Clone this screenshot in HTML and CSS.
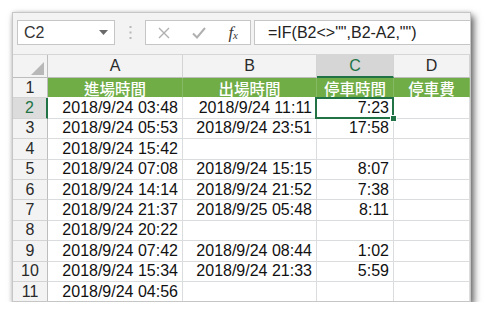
FILE: index.html
```html
<!DOCTYPE html>
<html lang="zh-Hant">
<head>
    <meta charset="UTF-8">
    <title>停車時間</title>
    <link rel="stylesheet" href="styles.css">
</head>
<body>
    <div class="window">
        <div class="toolbar">
            <div class="name-box">
                <span>C2</span>
                <svg class="drop" width="9" height="5" viewBox="0 0 9 5"><path d="M0 0h9L4.5 5z" fill="#6a6a6a"/></svg>
            </div>
            <div class="grip">
                <svg width="3" height="13" viewBox="0 0 3 13"><rect x="0.5" y="0" width="2" height="2" fill="#b8b8b8"/><rect x="0.5" y="5.5" width="2" height="2" fill="#b8b8b8"/><rect x="0.5" y="11" width="2" height="2" fill="#b8b8b8"/></svg>
            </div>
            <div class="fx-box">
                <svg width="12" height="12" viewBox="0 0 12 12"><path d="M1 1l10 10M11 1L1 11" stroke="#b0b0b0" stroke-width="1.4"/></svg>
                <svg width="14" height="12" viewBox="0 0 14 12"><path d="M1 6.5l4 4L13 1" stroke="#b0b0b0" stroke-width="2" fill="none"/></svg>
                <span class="fx">f<sub>x</sub></span>
            </div>
            <div class="formula">=IF(B2&lt;&gt;"",B2-A2,"")</div>
        </div>

        <div class="sheet">
            <div class="corner"></div>
            <div class="col-head">A</div>
            <div class="col-head">B</div>
            <div class="col-head active">C</div>
            <div class="col-head">D</div>

            <div class="row-head">1</div>
            <div class="cell title">進場時間</div>
            <div class="cell title">出場時間</div>
            <div class="cell title">停車時間</div>
            <div class="cell title">停車費</div>

            <div class="row-head active">2</div>
            <div class="cell">2018/9/24 03:48</div>
            <div class="cell">2018/9/24 11:11</div>
            <div class="cell selected">7:23<span class="handle"></span></div>
            <div class="cell"></div>

            <div class="row-head">3</div>
            <div class="cell">2018/9/24 05:53</div>
            <div class="cell">2018/9/24 23:51</div>
            <div class="cell">17:58</div>
            <div class="cell"></div>

            <div class="row-head">4</div>
            <div class="cell">2018/9/24 15:42</div>
            <div class="cell"></div>
            <div class="cell"></div>
            <div class="cell"></div>

            <div class="row-head">5</div>
            <div class="cell">2018/9/24 07:08</div>
            <div class="cell">2018/9/24 15:15</div>
            <div class="cell">8:07</div>
            <div class="cell"></div>

            <div class="row-head">6</div>
            <div class="cell">2018/9/24 14:14</div>
            <div class="cell">2018/9/24 21:52</div>
            <div class="cell">7:38</div>
            <div class="cell"></div>

            <div class="row-head">7</div>
            <div class="cell">2018/9/24 21:37</div>
            <div class="cell">2018/9/25 05:48</div>
            <div class="cell">8:11</div>
            <div class="cell"></div>

            <div class="row-head">8</div>
            <div class="cell">2018/9/24 20:22</div>
            <div class="cell"></div>
            <div class="cell"></div>
            <div class="cell"></div>

            <div class="row-head">9</div>
            <div class="cell">2018/9/24 07:42</div>
            <div class="cell">2018/9/24 08:44</div>
            <div class="cell">1:02</div>
            <div class="cell"></div>

            <div class="row-head">10</div>
            <div class="cell">2018/9/24 15:34</div>
            <div class="cell">2018/9/24 21:33</div>
            <div class="cell">5:59</div>
            <div class="cell"></div>

            <div class="row-head">11</div>
            <div class="cell">2018/9/24 04:56</div>
            <div class="cell"></div>
            <div class="cell"></div>
            <div class="cell"></div>
        </div>
    </div>
</body>
</html>
```

FILE: styles.css
```css
body {
    margin: 0;
    background-color: #FFFFFF;
    font-family: 'Liberation Sans', 'Noto Sans CJK TC', sans-serif;
}
.window {
    width: 459px;
    height: 290px;
    margin: 12px 0 0 12px;
    box-sizing: border-box;
    border: 1px solid #C6C6C6;
    background-color: #F3F3F3;
    box-shadow: 3px 4px 7px rgba(0, 0, 0, 0.6), 0 0 4px rgba(0, 0, 0, 0.12);
    overflow: hidden;
}
.toolbar {
    display: flex;
    align-items: flex-start;
    height: 42px;
    padding: 7px 0 0 4px;
    box-sizing: border-box;
    border-bottom: 1px solid #D6D6D6;
}
.name-box {
    display: flex;
    align-items: center;
    justify-content: space-between;
    width: 98px;
    height: 25px;
    box-sizing: border-box;
    padding: 0 6px 0 6px;
    border: 1px solid #C6C6C6;
    background-color: #FFFFFF;
    font-size: 16px;
    color: #333333;
}
.grip {
    display: flex;
    align-items: center;
    justify-content: center;
    width: 30px;
    height: 25px;
}
.fx-box {
    display: flex;
    align-items: center;
    justify-content: space-between;
    width: 106px;
    height: 25px;
    box-sizing: border-box;
    padding: 0 12px 0 12px;
    border: 1px solid #C6C6C6;
    background-color: #FFFFFF;
}
.fx {
    font-family: 'Liberation Serif', serif;
    font-style: italic;
    font-size: 17px;
    color: #3A3A3A;
}
.fx sub {
    font-size: 11px;
    vertical-align: -1px;
}
.formula {
    flex: 1;
    height: 25px;
    margin-left: 3px;
    box-sizing: border-box;
    padding: 0 0 0 13px;
    border: 1px solid #C6C6C6;
    border-right: none;
    background-color: #FFFFFF;
    font-size: 16px;
    line-height: 23px;
    color: #222222;
}
.sheet {
    display: grid;
    grid-template-columns: 35px 135px 134px 77px 1fr;
    grid-template-rows: 23px repeat(11, 20.4px);
    background-color: #FFFFFF;
    font-size: 16px;
}
.corner {
    position: relative;
    background-color: #F3F3F3;
    border-right: 1px solid #BDBDBD;
    border-bottom: 1px solid #BDBDBD;
}
.corner::after {
    content: '';
    position: absolute;
    right: 3px;
    bottom: 2px;
    border-style: solid;
    border-width: 0 0 13px 13px;
    border-color: transparent transparent #B8B8B8 transparent;
}
.col-head {
    display: flex;
    align-items: center;
    justify-content: center;
    background-color: #F3F3F3;
    border-right: 1px solid #D4D4D4;
    border-bottom: 1px solid #BDBDBD;
    color: #2A2A2A;
}
.col-head.active {
    background-color: #D6D6D6;
    border-bottom: 2px solid #217346;
    color: #217346;
}
.row-head {
    display: flex;
    align-items: center;
    justify-content: center;
    background-color: #F3F3F3;
    border-right: 1px solid #BDBDBD;
    border-bottom: 1px solid #D4D4D4;
    color: #2A2A2A;
}
.row-head.active {
    background-color: #DCDCDC;
    border-right: 2px solid #217346;
    color: #217346;
}
.cell {
    display: flex;
    align-items: center;
    justify-content: flex-end;
    padding: 0 4px 0 0;
    border-right: 1px solid #DADCDD;
    border-bottom: 1px solid #DADCDD;
    color: #111111;
    white-space: nowrap;
}
.cell.title {
    justify-content: center;
    padding: 0;
    background-color: #70AD47;
    border-right-color: #86B964;
    border-bottom-color: #FFFFFF;
    color: #FFFFFF;
    font-family: 'Noto Sans CJK TC', sans-serif;
    font-size: 15.5px;
    font-weight: 500;
}
.cell.selected {
    position: relative;
}
.cell.selected::after {
    content: '';
    position: absolute;
    top: -1px;
    left: -2px;
    right: -1px;
    bottom: -1px;
    border: 2px solid #217346;
}
.handle {
    position: absolute;
    right: -4px;
    bottom: -4px;
    width: 5px;
    height: 5px;
    background-color: #217346;
    border: 1px solid #FFFFFF;
    z-index: 1;
}
```
